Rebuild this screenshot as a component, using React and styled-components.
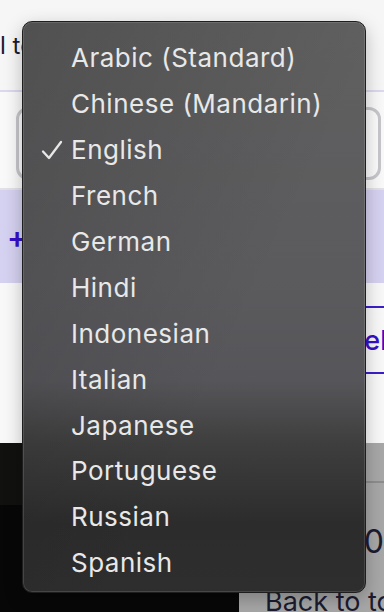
import React from 'react'
import styled, { createGlobalStyle } from 'styled-components'

const Global = createGlobalStyle`
  html, body {
    margin: 0;
    padding: 0;
    background: #f6f6f6;
    overflow: hidden;
  }
  body {
    font-family: Inter, "Liberation Sans", sans-serif;
  }
`

const Page = styled.div`
  position: relative;
  width: 384px;
  height: 612px;
  overflow: hidden;
  display: flex;
  flex-direction: column;
  & > * {
    flex-shrink: 0;
  }
`

const Header = styled.div`
  height: 92px;
  background: #f6f6f6;
  border-bottom: 2px solid #dcd8f0;
  display: flex;
  align-items: center;
  box-sizing: border-box;
`

const Title = styled.h2`
  margin: 0;
  font-size: 24px;
  font-weight: 400;
  color: #1c1b30;
  white-space: nowrap;
`

const FormRow = styled.div`
  height: 98px;
  background: #f9f9f9;
  border-bottom: 2px solid #e2e2e6;
  box-sizing: border-box;
  padding: 15px 3px 8px 16px;
  display: flex;
`

const Field = styled.div`
  flex: 1;
  border: 3px solid #c6c6cb;
  border-radius: 12px;
  background: #fbfbfb;
`

const AddBand = styled.div`
  height: 93px;
  background: #d5d1f0;
  display: flex;
  align-items: center;
  padding-left: 7px;
  color: #3510c8;
  font-size: 30px;
  font-weight: 600;
`

const Body = styled.div`
  height: 160px;
  background: #f8f8f8;
  display: flex;
  justify-content: flex-end;
  padding-top: 23px;
  box-sizing: border-box;
`

const LinkBox = styled.div`
  width: 140px;
  height: 68px;
  border-top: 2px solid #3a1fc9;
  border-bottom: 2px solid #3a1fc9;
  box-sizing: border-box;
  display: flex;
  align-items: center;
  justify-content: flex-end;
  margin-right: -3px;
  color: #3510c8;
  font-size: 27px;
  font-weight: 500;
`

const Footer = styled.div`
  flex: 1 0 auto;
  background: linear-gradient(#111110 0, #111110 62px, #070707 62px);
  display: flex;
  justify-content: flex-end;
`

const Card = styled.div`
  width: 145px;
  background: #a7a7a7;
  display: flex;
  flex-direction: column;
`

const CardHead = styled.div`
  height: 40px;
  box-sizing: border-box;
  border-bottom: 2px solid #8d8d8d;
`

const CardValue = styled.div`
  height: 104px;
  box-sizing: border-box;
  padding-top: 12px;
  display: flex;
  align-items: center;
  justify-content: flex-end;
  font-size: 32px;
  color: #1c1b30;
`

const BackLink = styled.div`
  padding-left: 26px;
  font-size: 27px;
  color: #1c1b30;
  white-space: nowrap;
  line-height: 30px;
`

const Menu = styled.ul`
  position: absolute;
  left: 22px;
  top: 21px;
  width: 344px;
  height: 572px;
  box-sizing: border-box;
  margin: 0;
  padding: 13px 0 5px 0;
  list-style: none;
  border-radius: 10px;
  border: 1px solid #1e1e1e;
  background:
    linear-gradient(115deg, rgba(0, 0, 0, 0.16) 0%, rgba(0, 0, 0, 0) 60%),
    linear-gradient(180deg, #606060 0%, #5b5b5e 45%, #56565a 63%, #3e3e3e 74%, #2c2c2c 88%, #2e2e2e 100%);
  box-shadow:
    inset 0 0 0 1px rgba(255, 255, 255, 0.12),
    0 6px 18px rgba(0, 0, 0, 0.25);
  font-family: Inter, "Liberation Sans", sans-serif;
`

const Item = styled.li`
  height: 45.9px;
  display: flex;
  align-items: center;
  padding-left: 18px;
  color: #e8e8e8;
  font-size: 26px;
  font-weight: 400;
  letter-spacing: 0.5px;
`

const Check = styled.svg`
  width: 22px;
  height: 22px;
  margin-right: 8px;
  visibility: ${p => (p.$on ? 'visible' : 'hidden')};
`

const languages = [
  'Arabic (Standard)',
  'Chinese (Mandarin)',
  'English',
  'French',
  'German',
  'Hindi',
  'Indonesian',
  'Italian',
  'Japanese',
  'Portuguese',
  'Russian',
  'Spanish',
]

export default function App() {
  return (
    <Page>
      <Global />
      <Header>
        <Title>l tell us which language</Title>
      </Header>
      <FormRow>
        <Field />
      </FormRow>
      <AddBand>+</AddBand>
      <Body>
        <LinkBox>Cancel</LinkBox>
      </Body>
      <Footer>
        <Card>
          <CardHead />
          <CardValue>1,200</CardValue>
          <BackLink>Back to top</BackLink>
        </Card>
      </Footer>
      <Menu>
        {languages.map(l => (
          <Item key={l}>
            <Check $on={l === 'English'} viewBox="0 0 22 22">
              <path d="M2 12.5 L8 19 L20 3" fill="none" stroke="#e8e8e8" strokeWidth="2.3" strokeLinecap="round" strokeLinejoin="round" />
            </Check>
            {l}
          </Item>
        ))}
      </Menu>
    </Page>
  )
}
